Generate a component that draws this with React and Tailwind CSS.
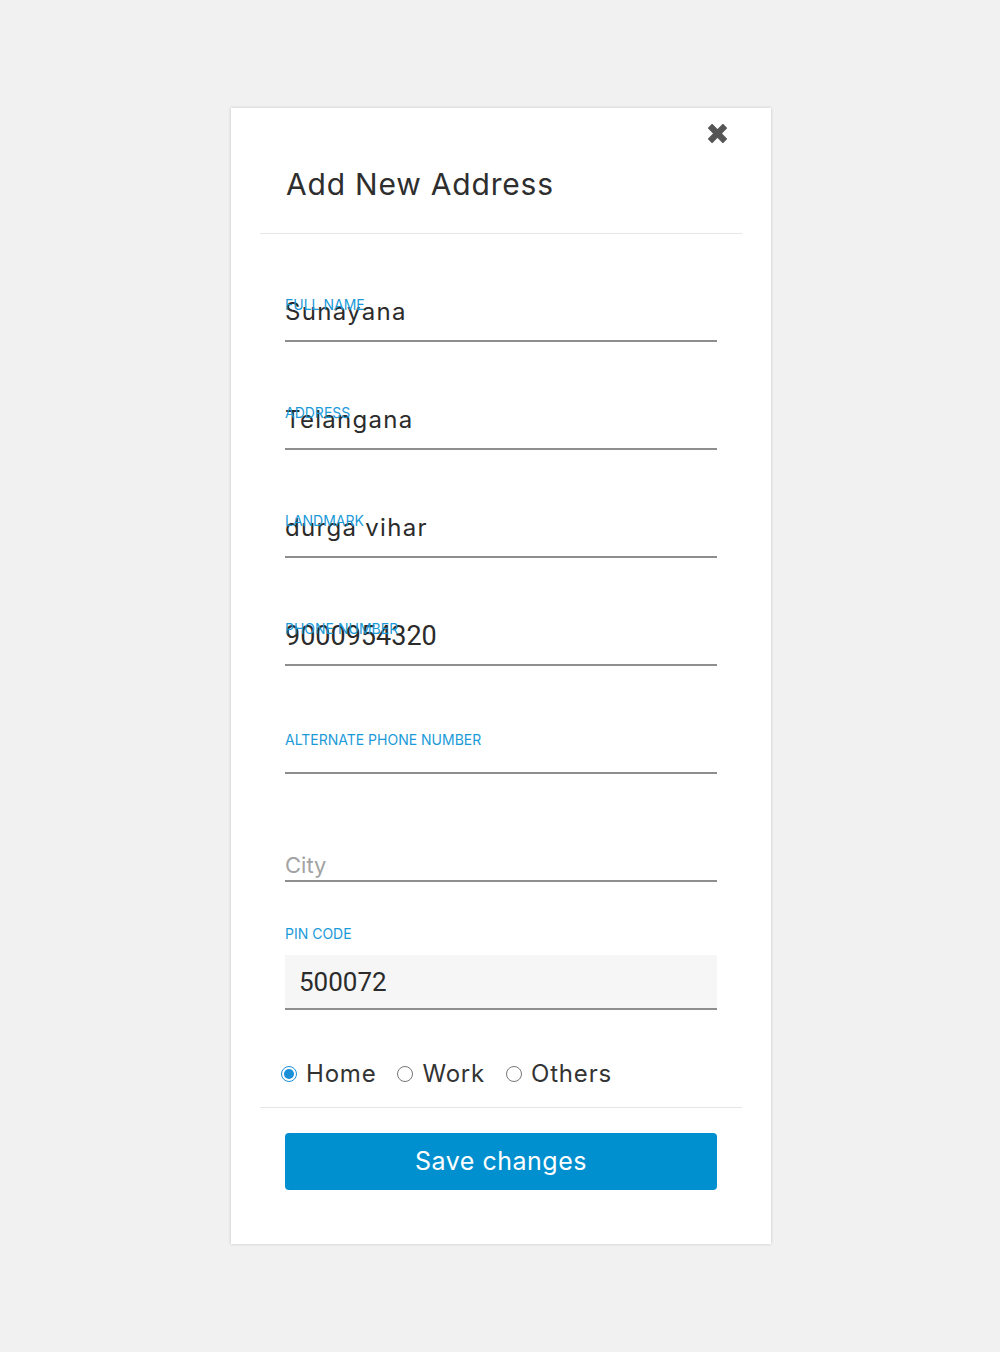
import { useState } from 'react';

const font = { fontFamily: 'Inter, "Noto Sans", sans-serif' };
const digits = { fontFamily: 'Roboto, "Liberation Sans", sans-serif' };

function Field({ label, value, mono }) {
  return (
    <div className="relative flex h-[108px] flex-col justify-end border-b-2 border-[#8e8e8e]">
      {value && (
        <span
          className={`mb-[13px] leading-[30px] text-[#2b2b2b] ${mono ? "text-[27px]" : "text-[24px] tracking-[1.3px]"}`}
          style={mono ? digits : font}
        >
          {value}
        </span>
      )}
      <span
        className={`absolute left-0 text-[14px] leading-[16px] text-[#1b9ad8] ${value ? "bottom-[27px]" : "bottom-[24px]"}`}
        style={font}
      >
        {label}
      </span>
    </div>
  );
}

function Radio({ checked, label }) {
  return (
    <label className="flex items-center gap-[9px]">
      <span
        className={`flex h-[16px] w-[16px] items-center justify-center rounded-full border ${
          checked ? "border-[#1a8fd8]" : "border-[#777]"
        }`}
      >
        {checked && <span className="h-[10px] w-[10px] rounded-full bg-[#1a8fd8]" />}
      </span>
      <span className="text-[24px] leading-[28px] tracking-[0.8px] text-[#333]" style={font}>
        {label}
      </span>
    </label>
  );
}

export default function App() {
  const [type] = useState("Home");

  return (
    <div className="min-h-[1352px] bg-[#f1f1f1] pt-[108px]">
      <div className="relative ml-[231px] w-[540px] bg-white pb-[54px] shadow-[0_0_3px_rgba(0,0,0,0.18)]">
        <button className="absolute right-[40px] top-[12px] text-[#555]" aria-label="close">
          <svg width="27" height="27" viewBox="0 0 24 24">
            <path
              d="M4 7.2 7.2 4 12 8.8 16.8 4 20 7.2 15.2 12 20 16.8 16.8 20 12 15.2 7.2 20 4 16.8 8.8 12Z"
              fill="currentColor"
              stroke="currentColor"
              strokeWidth="1"
              strokeLinejoin="round"
            />
          </svg>
        </button>

        <div className="mx-[29px] h-[126px] border-b border-[#e6e6e6] pl-[26px] pt-[58px]">
          <h2 className="text-[30px] leading-[36px] tracking-[0.8px] text-[#2e2e2e]" style={font}>
            Add New Address
          </h2>
        </div>

        <div className="px-[54px]">
          <Field label="FULL NAME" value="Sunayana" />
          <Field label="ADDRESS" value="Telangana" />
          <Field label="LANDMARK" value="durga vihar" />
          <Field label="PHONE NUMBER" value="9000954320" mono />
          <Field label="ALTERNATE PHONE NUMBER" />
          <div className="flex h-[108px] flex-col justify-end border-b-2 border-[#8e8e8e]">
            <span className="mb-[2px] text-[22px] leading-[26px] text-[#a3a3a3]" style={font}>
              City
            </span>
          </div>

          <div className="mt-[44px] text-[14px] leading-[16px] text-[#1b9ad8]" style={font}>
            PIN CODE
          </div>
          <div className="mt-[13px] flex h-[55px] items-center border-b-2 border-[#8e8e8e] bg-[#f5f6f5] pl-[14px]">
            <span className="text-[26px] leading-[30px] text-[#2b2b2b]" style={digits}>
              500072
            </span>
          </div>

          <div className="ml-[-4px] mt-[50px] flex items-center gap-[21px]">
            <Radio checked={type === "Home"} label="Home" />
            <Radio checked={type === "Work"} label="Work" />
            <Radio checked={type === "Others"} label="Others" />
          </div>
        </div>

        <div className="mx-[29px] mt-[19px] border-t border-[#e6e6e6]" />

        <div className="px-[54px] pt-[25px]">
          <button
            className="h-[57px] w-full rounded-[4px] bg-[#0190cf] text-[25px] tracking-[0.5px] text-white"
            style={font}
          >
            Save changes
          </button>
        </div>
      </div>
    </div>
  );
}
